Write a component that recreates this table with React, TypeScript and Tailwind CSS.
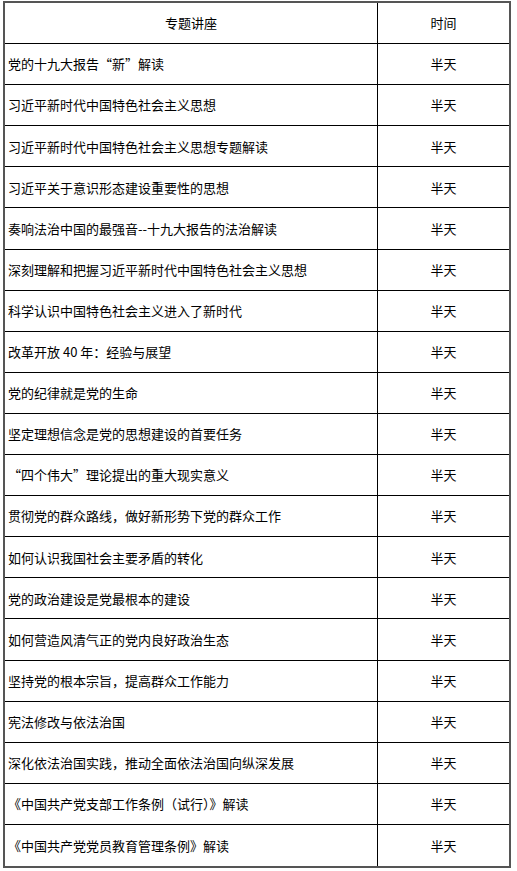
const lectures = [
  '党的十九大报告“新”解读',
  '习近平新时代中国特色社会主义思想',
  '习近平新时代中国特色社会主义思想专题解读',
  '习近平关于意识形态建设重要性的思想',
  '奏响法治中国的最强音--十九大报告的法治解读',
  '深刻理解和把握习近平新时代中国特色社会主义思想',
  '科学认识中国特色社会主义进入了新时代',
  '改革开放 40 年：经验与展望',
  '党的纪律就是党的生命',
  '坚定理想信念是党的思想建设的首要任务',
  '“四个伟大”理论提出的重大现实意义',
  '贯彻党的群众路线，做好新形势下党的群众工作',
  '如何认识我国社会主要矛盾的转化',
  '党的政治建设是党最根本的建设',
  '如何营造风清气正的党内良好政治生态',
  '坚持党的根本宗旨，提高群众工作能力',
  '宪法修改与依法治国',
  '深化依法治国实践，推动全面依法治国向纵深发展',
  '《中国共产党支部工作条例（试行）》解读',
  '《中国共产党党员教育管理条例》解读',
];

export default function App() {
  return (
    <div
      className="w-[517px] h-[871px] bg-white pt-[1px] pl-[3px] text-[13px] text-black"
      style={{ fontFamily: '"Noto Sans CJK SC", "Noto Sans", sans-serif' }}
    >
      <div className="w-[508px] h-[867px] border-2 border-[#555555] grid grid-cols-[373px_1fr] grid-rows-[repeat(21,minmax(0,1fr))]">
        {/* header */}
        <div className="flex items-center justify-center border-r border-b border-black">专题讲座</div>
        <div className="flex items-center justify-center border-b border-black">时间</div>

        {lectures.map((title, i) => {
          const last = i === lectures.length - 1;
          return (
            <div key={i} className="contents">
              <div className={`flex items-center pl-[3px] border-r border-black ${last ? '' : 'border-b'}`}>
                {title}
              </div>
              <div className={`flex items-center justify-center border-black ${last ? '' : 'border-b'}`}>
                半天
              </div>
            </div>
          );
        })}
      </div>
    </div>
  );
}
